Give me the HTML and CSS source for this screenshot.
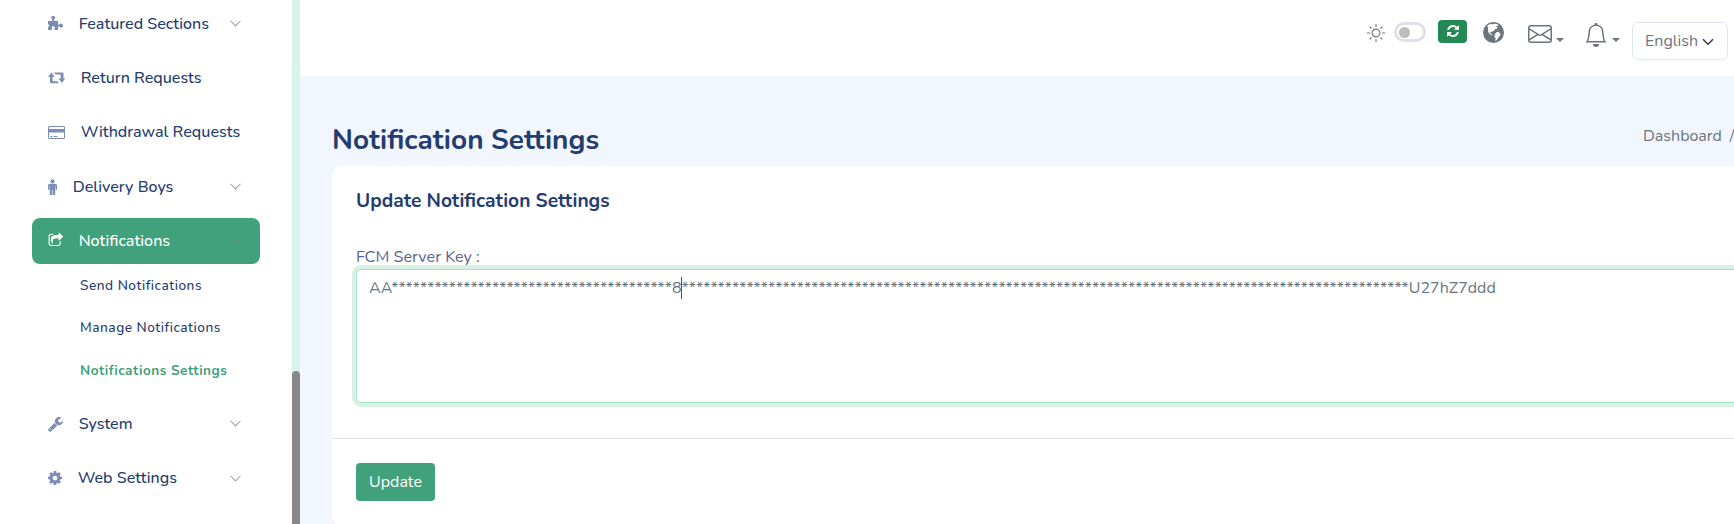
FILE: index.html
```html
<!DOCTYPE html>
<html lang="en">
<head>
<meta charset="utf-8">
<title>Notification Settings</title>
<link rel="stylesheet" href="styles.css">
</head>
<body>
<svg class="defs" width="0" height="0">
  <symbol id="chev" viewBox="0 0 16 16"><path fill-rule="evenodd" d="M1.646 4.646a.5.5 0 0 1 .708 0L8 10.293l5.646-5.647a.5.5 0 0 1 .708.708l-6 6a.5.5 0 0 1-.708 0l-6-6a.5.5 0 0 1 0-.708z"/></symbol>
</svg>
<aside class="sidebar">
  <a class="item"><svg class="ico" width="15" height="15" viewBox="0 0 15 15"><path d="M0 5h4.200V3.300a1.900 1.900 0 1 1 2 0V5H10v3.600h1.500a1.900 1.900 0 1 1 0 2H10V14H6.600v-1.700a1.500 1.500 0 1 0-2.700 0V14H0v-3.200h1V8.500H0z"/></svg><span>Featured Sections</span><svg class="chev"><use href="#chev"/></svg></a>
  <a class="item"><svg class="ico" width="17" height="15" viewBox="0 0 17 15"><path d="M0 6.800 3.300 2.400 6.600 6.800H4.600V11.200H9.300L11 13.200H3a1 1 0 0 1-1-1V6.800zM6 2.400h8.500a1 1 0 0 1 1 1v5H17.300l-3.500 4.600-3.400-4.600H12.600V4.400H7.600z"/></svg><span>Return Requests</span></a>
  <a class="item"><svg class="ico" width="17" height="15" viewBox="0 0 17 15"><path fill-rule="evenodd" d="M1.500 1h14A1.500 1.500 0 0 1 17 2.500v10a1.500 1.500 0 0 1-1.500 1.500h-14A1.500 1.500 0 0 1 0 12.500v-10A1.500 1.500 0 0 1 1.500 1zM1 2.500V4h15V2.500a.5.5 0 0 0-.5-.5h-14a.5.5 0 0 0-.5.5zM1 7.500v5a.5.5 0 0 0 .5.5h14a.5.5 0 0 0 .5-.5v-5zM2.200 11h2.300v1H2.200zM5.800 11h3.400v1H5.800z"/></svg><span>Withdrawal Requests</span></a>
  <a class="item"><svg class="ico" width="9" height="16" viewBox="0 0 9 16"><circle cx="4.500" cy="2.200" r="2"/><path d="M1.800 4.700h5.400A1.800 1.800 0 0 1 9 6.500v3.700a.7.7 0 0 1-1.400 0V7h-.4v8.200a.8.8 0 0 1-2.400.3V11h-.6v4.500a.8.8 0 0 1-2.400-.3V7h-.4v3.200a.7.7 0 0 1-1.400 0V6.500a1.800 1.800 0 0 1 1.800-1.800z"/></svg><span>Delivery Boys</span><svg class="chev"><use href="#chev"/></svg></a>
  <a class="item active"><svg class="ico" width="15" height="16" viewBox="0 128 1728 1664"><path d="M1472 989v259q0 119-84.500 203.500t-203.500 84.500h-832q-119 0-203.500-84.500t-84.500-203.500v-832q0-119 84.500-203.500t203.500-84.500h255q13 0 22.500 9.500t9.500 22.500q0 27-26 32-77 26-133 60-10 4-16 4h-112q-66 0-113 47t-47 113v832q0 66 47 113t113 47h832q66 0 113-47t47-113v-214q0-19 18-29 28-13 54-37 16-16 35-8 21 9 21 29zm237-496l-384 384q-18 19-45 19-12 0-25-5-39-17-39-59v-192h-160q-323 0-438 131-119 137-74 473 3 23-20 34-8 2-12 2-16 0-26-13-10-14-21-31t-39.500-68.500-49.500-99.500-38.500-114-17.500-122q0-49 3.500-91t14-90 28-88 47-81.500 68.500-74 94.500-61.500 124.500-48.500 159.500-30.500 196.500-11h160v-192q0-42 39-59 13-5 25-5 26 0 45 19l384 384q19 19 19 45t-19 45z"/></svg><span>Notifications</span><svg class="chev"><use href="#chev"/></svg></a>
  <nav class="sub">
    <a>Send Notifications</a>
    <a>Manage Notifications</a>
    <a class="current">Notifications Settings</a>
  </nav>
  <a class="item"><svg class="ico" width="15" height="16" viewBox="64 64 1664 1664"><path d="M448 1472q0-26-19-45t-45-19-45 19-19 45 19 45 45 19 45-19 19-45zm644-420l-682 682q-37 37-90 37-52 0-91-37l-106-108q-38-36-38-90 0-53 38-91l681-681q39 98 114.500 173.500t173.500 114.500zm634-435q0 39-23 106-47 134-164.500 217.500t-258.500 83.500q-185 0-316.500-131.500t-131.500-316.500 131.500-316.500 316.500-131.500q58 0 121.500 16.500t107.500 46.500q16 11 16 28t-16 28l-293 169v224l193 107q5-3 79-48.500t135.500-81 70.500-35.500q15 0 23.500 10t8.500 25z"/></svg><span>System</span><svg class="chev"><use href="#chev"/></svg></a>
  <a class="item"><svg class="ico" width="14" height="14" viewBox="128 128 1536 1536"><path d="M1152 896q0-106-75-181t-181-75-181 75-75 181 75 181 181 75 181-75 75-181zm512-109v222q0 12-8 23t-20 13l-185 28q-19 54-39 91 35 50 107 138 10 12 10 25t-9 23q-27 37-99 108t-94 71q-12 0-26-9l-138-108q-44 23-91 38-16 136-29 186-7 28-36 28h-222q-14 0-24.500-8.500t-11.500-21.500l-28-184q-49-16-90-37l-141 107q-10 9-25 9-14 0-25-11-126-114-165-168-7-10-7-23 0-12 8-23 15-21 51-66.500t54-70.500q-27-50-41-99l-183-27q-13-2-21-12.500t-8-23.500v-222q0-12 8-23t19-13l186-28q14-46 39-92-40-57-107-138-10-12-10-24 0-10 9-23 26-36 98.500-107.500t94.500-71.500q13 0 26 10l138 107q44-23 91-38 16-136 29-186 7-28 36-28h222q14 0 24.500 8.500t11.500 21.500l28 184q49 16 90 37l142-107q9-9 24-9 13 0 25 10 129 119 165 170 7 8 7 22 0 12-8 23-15 21-51 66.500t-54 70.500q26 50 41 98l183 28q13 2 21 12.500t8 23.500z"/></svg><span>Web Settings</span><svg class="chev"><use href="#chev"/></svg></a>
</aside>
<div class="track"><div class="thumb"></div></div>
<div class="main">
  <header class="topbar">
    <svg class="sun" width="18" height="18" viewBox="0 0 18 18"><circle cx="9" cy="9" r="3.900"/><path d="M9 0v3M9 15v3M0 9h3M15 9h3M2.600 2.600l1.900 1.900M13.500 13.500l1.900 1.900M2.600 15.400l1.900-1.900M13.500 4.500l1.900-1.900"/></svg>
    <span class="switch"><span class="knob"></span></span>
    <button class="refresh"><svg width="14" height="14" viewBox="0 0 1792 1792"><path d="M1639 1056q0 5-1 7-64 268-268 434.500t-478 166.500q-146 0-282.500-55t-243.500-157l-129 129q-19 19-45 19t-45-19-19-45v-448q0-26 19-45t45-19h448q26 0 45 19t19 45-19 45l-137 137q71 66 161 102t187 36q134 0 250-65t186-179q11-17 53-117 8-23 30-23h192q13 0 22.500 9.500t9.500 22.500zm25-800v448q0 26-19 45t-45 19h-448q-26 0-45-19t-19-45 19-45l138-138q-148-137-349-137-134 0-250 65t-186 179q-11 17-53 117-8 23-30 23h-199q-13 0-22.500-9.500t-9.500-22.500v-7q65-268 270-434.500t480-166.500q146 0 284 55.500t245 156.500l130-129q19-19 45-19t45 19 19 45z"/></svg></button>
    <svg class="globe" width="21" height="21" viewBox="0 0 21 21"><circle cx="10.500" cy="10.500" r="10.500"/><path class="land" d="M5.600 2.700 8 1.800l1.400.6 1.300-.7 3.100.3 1.700.9-.8 1-1.500-.3.400 1.400 1.400.4-1.800 1.500-1.400.3-.9 1.700-1.300.2.100 1.200-1.300-.7-1.300.9.500 1.300 1.300.2.900 1.300-1.400-.3-1.900-1.200-1.200-1.800-.4-2.300.4-2.400L3.900 4.300zM13.300 10.300l1.700-.5 1.500.9 1.100 1.600-.8 1.700-1.500 1.700-1.300 2.400-1.700.8.300-2.600-1.300-1.600.4-2z"/></svg>
    <span class="drop mail"><svg width="24" height="24" viewBox="0 0 16 16"><path d="M0 4a2 2 0 0 1 2-2h12a2 2 0 0 1 2 2v8a2 2 0 0 1-2 2H2a2 2 0 0 1-2-2V4zm2-1a1 1 0 0 0-1 1v.217l7 4.200 7-4.200V4a1 1 0 0 0-1-1H2zm13 2.383-4.758 2.855L15 11.114v-5.730zm-.034 6.878L9.271 8.820 8 9.583 6.728 8.820l-5.694 3.440A1 1 0 0 0 2 13h12a1 1 0 0 0 .966-.739zM1 11.114l4.758-2.876L1 5.383v5.730z"/></svg><i class="caret"></i></span>
    <span class="drop bell"><svg width="24" height="24" viewBox="0 0 16 16"><path d="M8 16a2 2 0 0 0 2-2H6a2 2 0 0 0 2 2zM8 1.918l-.797.161A4.002 4.002 0 0 0 4 6c0 .628-.134 2.197-.459 3.742-.160.767-.376 1.566-.663 2.258h10.244c-.287-.692-.502-1.490-.663-2.258C12.134 8.197 12 6.628 12 6a4.002 4.002 0 0 0-3.203-3.920L8 1.917zM14.220 12c.223.447.481.801.780 1H1c.299-.199.557-.553.780-1C2.680 10.200 3 6.880 3 6c0-2.420 1.720-4.440 4.005-4.901a1 1 0 1 1 1.990 0A5.002 5.002 0 0 1 13 6c0 .880.320 4.200 1.220 6z"/></svg><i class="caret"></i></span>
    <div class="lang">English<svg width="12" height="12" viewBox="0 0 12 12"><path d="M1 3.300 6 8.300l5-5"/></svg></div>
  </header>
  <main class="content">
    <div class="heading">
      <h1>Notification Settings</h1>
      <div class="crumbs"><span>Dashboard</span><span>/</span></div>
    </div>
    <section class="card">
      <h2>Update Notification Settings</h2>
      <div class="field">
        <div class="label">FCM Server Key :</div>
        <div class="area">AA***************************************8<i class="cursor"></i>*****************************************************************************************************U27hZ7ddd</div>
      </div>
      <div class="foot"><button class="update">Update</button></div>
    </section>
  </main>
</div>
</body>
</html>
```
FILE: styles.css
```css
* { box-sizing: border-box; }
body {
  margin: 0; width: 1734px; height: 524px; overflow: hidden; display: flex;
  font: 400 16px/24px Nunito, Lato, sans-serif; color: #6c757d; background: #f1f6ff;
}
.defs { position: absolute; }
h1, h2 { margin: 0; font-weight: 700; color: #243c70; }
button { font: inherit; border: 0; margin: 0; padding: 0; color: #fff; }

.sidebar { width: 292px; flex: none; background: #fff; padding: 0.4px 32px 0; height: 524px; overflow: hidden; }
.item {
  display: flex; align-items: center; height: 46.4px; margin-bottom: 8px; padding: 0 18.500px 0 16px;
  border-radius: 8px; color: #243c70; font-size: 16.1px; font-weight: 500; white-space: nowrap;
}
.item span { margin-left: 15.7px; flex: 1; }
.ico { fill: #7c8db5; flex: none; }
.chev { width: 13px; height: 13px; flex: none; fill: #8c8c8c; }
.item.active { background: #41a17c; color: #fff; }
.active .ico { fill: #fff; }
.active .chev { fill: #66917f; }
.sub { height: 128.3px; margin: -8px 0 8px; padding-left: 48px; display: grid; grid-template-rows: repeat(3, 1fr); align-items: center; }
.sub a { font-size: 13.7px; letter-spacing: .5px; font-weight: 500; color: #243c70; line-height: 20px; }
.sub a.current { color: #41a17c; font-weight: 700; font-size: 13.6px; }

.track { width: 8px; flex: none; background: #d8f3e7; padding-top: 371px; }
.thumb { height: 153px; border-radius: 4px 4px 0 0; background: #888; }

.main { flex: 1; min-width: 0; height: 524px; overflow: hidden; }
.topbar { height: 76px; background: #fff; display: flex; align-items: flex-start; padding: 20px 6px 0 0; justify-content: flex-end; }
.sun { margin: 4px 9px 0 0; fill: none; stroke: #6c757d; stroke-width: 1.1; }
.switch { width: 32px; height: 20px; margin: 2px 12px 0 0; border: 3px solid #dfe1ea; border-radius: 10px; padding: 1.500px 2px; }
.knob { display: block; width: 11px; height: 11px; border-radius: 50%; background: #bdbdbd; }
.refresh { width: 29px; height: 23px; margin-right: 16px; border-radius: 4px; background: #258956; display: flex; align-items: center; justify-content: center; }
.refresh svg { fill: #fff; margin-top: -1px; }
.globe { margin: 2px 24px 0 0; fill: #6c757d; }
.globe .land { fill: #fff; }
.drop { display: flex; }
.drop svg { fill: #6c757d; }
.mail { margin: 2px 20px 0 0; }
.bell { margin: 3px 12px 0 0; }
.caret { margin: 16px 0 0 4px; width: 8px; border: 4px solid transparent; border-top-color: #6c757d; border-bottom: 0; height: 4px; }
.bell .caret { margin-top: 15px; }
.lang { width: 96px; height: 38px; margin-top: 2px; border: 1px solid #dce7f1; border-radius: 6px; padding: 6px 0 0 12px; display: flex; }
.lang svg { margin: 7px 0 0 4px; fill: none; stroke: #343a40; stroke-width: 1.5; }

.content { padding: 44px 0 0 32px; }
.heading { display: flex; justify-content: space-between; height: 46px; }
h1 { font-size: 28px; line-height: 40px; }
.crumbs { display: flex; gap: 8px; width: 91px; white-space: nowrap; padding-top: 4px; }
.card { width: 1500px; height: 360px; background: #fff; border-radius: 10px; padding-top: 24px; }
h2 { font-size: 19.2px; line-height: 23px; padding-left: 24px; }
.field { padding: 32px 24px 34px; height: 225px; }
.label { color: #5a618f; font-size: 16.2px; }
.area {
  height: 134px; border: 1px solid #a5e6c8; border-radius: 5px; box-shadow: 0 0 0 4px #d9f0e4; padding: 6px 12px;
  white-space: nowrap; background: #fff;
}
.cursor { display: inline-block; width: 1px; height: 22px; margin: 0 0 0 -1px; vertical-align: -6px; background: #4a5568; }
.foot { border-top: 1px solid #dedede; padding: 24px; }
.update { width: 79px; height: 38px; border-radius: 4px; background: #41a17c; display: block; }
```
